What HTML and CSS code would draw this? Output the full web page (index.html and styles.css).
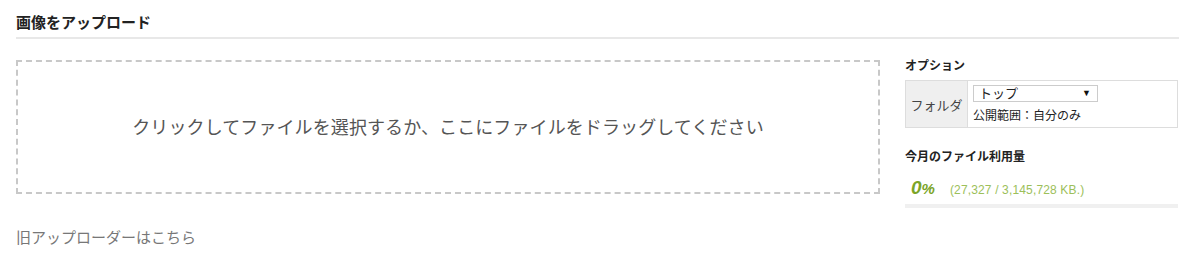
FILE: index.html
```html
<!DOCTYPE html>
<html lang="ja">
<head>
<meta charset="utf-8">
<link rel="stylesheet" href="styles.css">
</head>
<body>
<div class="page">
  <h1 class="title">画像をアップロード</h1>
  <div class="content">
    <div class="main">
      <div class="dropzone">クリックしてファイルを選択するか、ここにファイルをドラッグしてください</div>
      <a class="old-link" href="#">旧アップローダーはこちら</a>
    </div>
    <div class="side">
      <h2 class="side-title">オプション</h2>
      <table class="opt">
        <tr>
          <th>フォルダ</th>
          <td>
            <div class="select"><span>トップ</span><span class="arrow">▼</span></div>
            <div class="scope">公開範囲：自分のみ</div>
          </td>
        </tr>
      </table>
      <h2 class="side-title usage-title">今月のファイル利用量</h2>
      <div class="usage">
        <span class="pct">0<small>%</small></span>
        <span class="amount">(27,327 / 3,145,728 KB.)</span>
      </div>
      <div class="bar"><div class="bar-fill" style="width:0%"></div></div>
    </div>
  </div>
</div>
</body>
</html>
```

FILE: styles.css
```css
* { box-sizing: border-box; }
html, body { margin: 0; padding: 0; background: #fff; }
body {
  font-family: "Liberation Sans", "Noto Sans CJK JP", sans-serif;
  color: #333;
  width: 1200px;
  height: 272px;
  overflow: hidden;
}
.page { padding: 0 21px 0 16px; }
.title {
  margin: 0;
  padding-top: 13px;
  height: 39px;
  font-size: 15px;
  line-height: 20px;
  font-weight: bold;
  color: #222;
  border-bottom: 2px solid #e8e8e8;
}
.content {
  display: flex;
  gap: 25px;
  padding-top: 19px;
}
.main { width: 864px; display: flex; flex-direction: column; padding-top: 2px; }
.dropzone {
  height: 134px;
  border: 2px dashed #c8c8c8;
  display: flex;
  align-items: center;
  justify-content: center;
  font-size: 18px;
  letter-spacing: 0.1px;
  color: #555;
  padding-bottom: 3px;
}
.old-link {
  margin-top: 34px;
  font-size: 15px;
  line-height: 20px;
  color: #777;
  text-decoration: none;
}
.side { width: 274px; display: flex; flex-direction: column; }
.side-title {
  margin: 0;
  font-size: 12px;
  line-height: 16px;
  font-weight: bold;
  color: #222;
}
.opt {
  margin-top: 6px;
  width: 273px;
  border-collapse: collapse;
  border: 1px solid #ddd;
}
.opt th {
  width: 62px;
  background: #efefef;
  border-right: 1px solid #ddd;
  font-weight: normal;
  font-size: 13px;
  color: #444;
  padding: 0;
  height: 47px;
  text-align: center;
}
.opt td { padding: 4px 5px 3px 5px; vertical-align: top; }
.select {
  width: 125px;
  height: 17px;
  border: 1px solid #ccc;
  font-size: 13px;
  line-height: 15px;
  color: #222;
  display: flex;
  justify-content: space-between;
  padding: 0 6px 0 5px;
}
.select .arrow { font-size: 9px; color: #111; }
.scope { font-size: 12px; line-height: 16px; margin-top: 6px; color: #222; }
.usage-title { margin-top: 21px; }
.usage {
  display: flex;
  align-items: baseline;
  gap: 15px;
  padding-left: 6px;
  margin-top: 12px;
  height: 24px;
}
.pct {
  font-size: 19px;
  font-weight: bold;
  font-style: italic;
  color: #7ba428;
}
.pct small { font-size: 15px; }
.amount { font-size: 12px; letter-spacing: 0.15px; color: #9cc05a; }
.bar {
  margin-top: 3px;
  width: 273px;
  height: 4px;
  background: #f0f0f0;
}
.bar-fill { height: 100%; background: #7ba428; }
```
